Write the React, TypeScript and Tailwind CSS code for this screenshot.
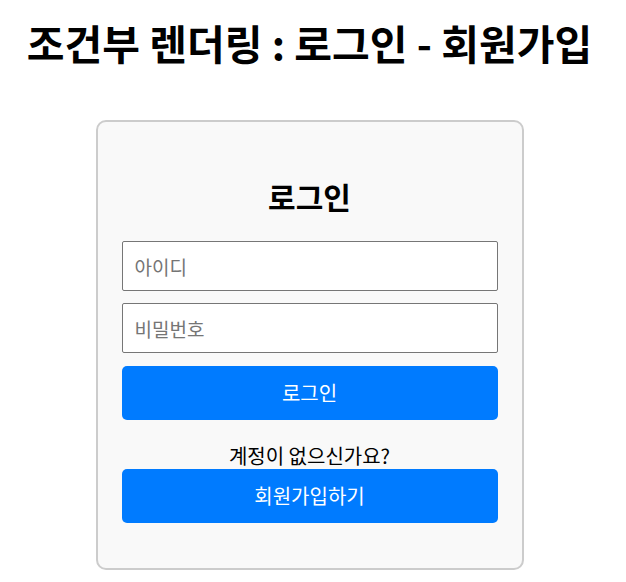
export default function App() {
  return (
    <div className="min-h-screen bg-white pr-[7px] text-black font-['Noto_Sans_CJK_KR','Noto_Sans',sans-serif]">
      <h1 className="pt-[14px] text-center text-[41px] font-bold leading-[1.4]">
        조건부 렌더링 : 로그인 - 회원가입
      </h1>
      <div className="mx-auto mt-[49px] w-[428px] rounded-[10px] border-2 border-[#cccccc] bg-[#f9f9f9] px-6 pt-[53px] pb-[45px]">
        <h2 className="text-center text-[30px] font-bold leading-[1.4]">로그인</h2>
        <div className="mt-[24px] flex flex-col">
          <input
            type="text"
            placeholder="아이디"
            className="h-[50px] w-full rounded-[2px] border border-[#767676] bg-white px-3 text-[19px] placeholder:text-[#757575] outline-none"
          />
          <input
            type="password"
            placeholder="비밀번호"
            className="mt-3 h-[50px] w-full rounded-[2px] border border-[#767676] bg-white px-3 text-[19px] placeholder:text-[#757575] outline-none"
          />
          <button
            type="button"
            className="mt-[13px] h-[54px] w-full rounded-[5px] bg-[#007bff] text-[20px] text-white"
          >
            로그인
          </button>
          <p className="mt-[22px] text-center text-[20px] leading-[27px]">계정이 없으신가요?</p>
          <button
            type="button"
            className="h-[54px] w-full rounded-[5px] bg-[#007bff] text-[20px] text-white"
          >
            회원가입하기
          </button>
        </div>
      </div>
    </div>
  );
}
